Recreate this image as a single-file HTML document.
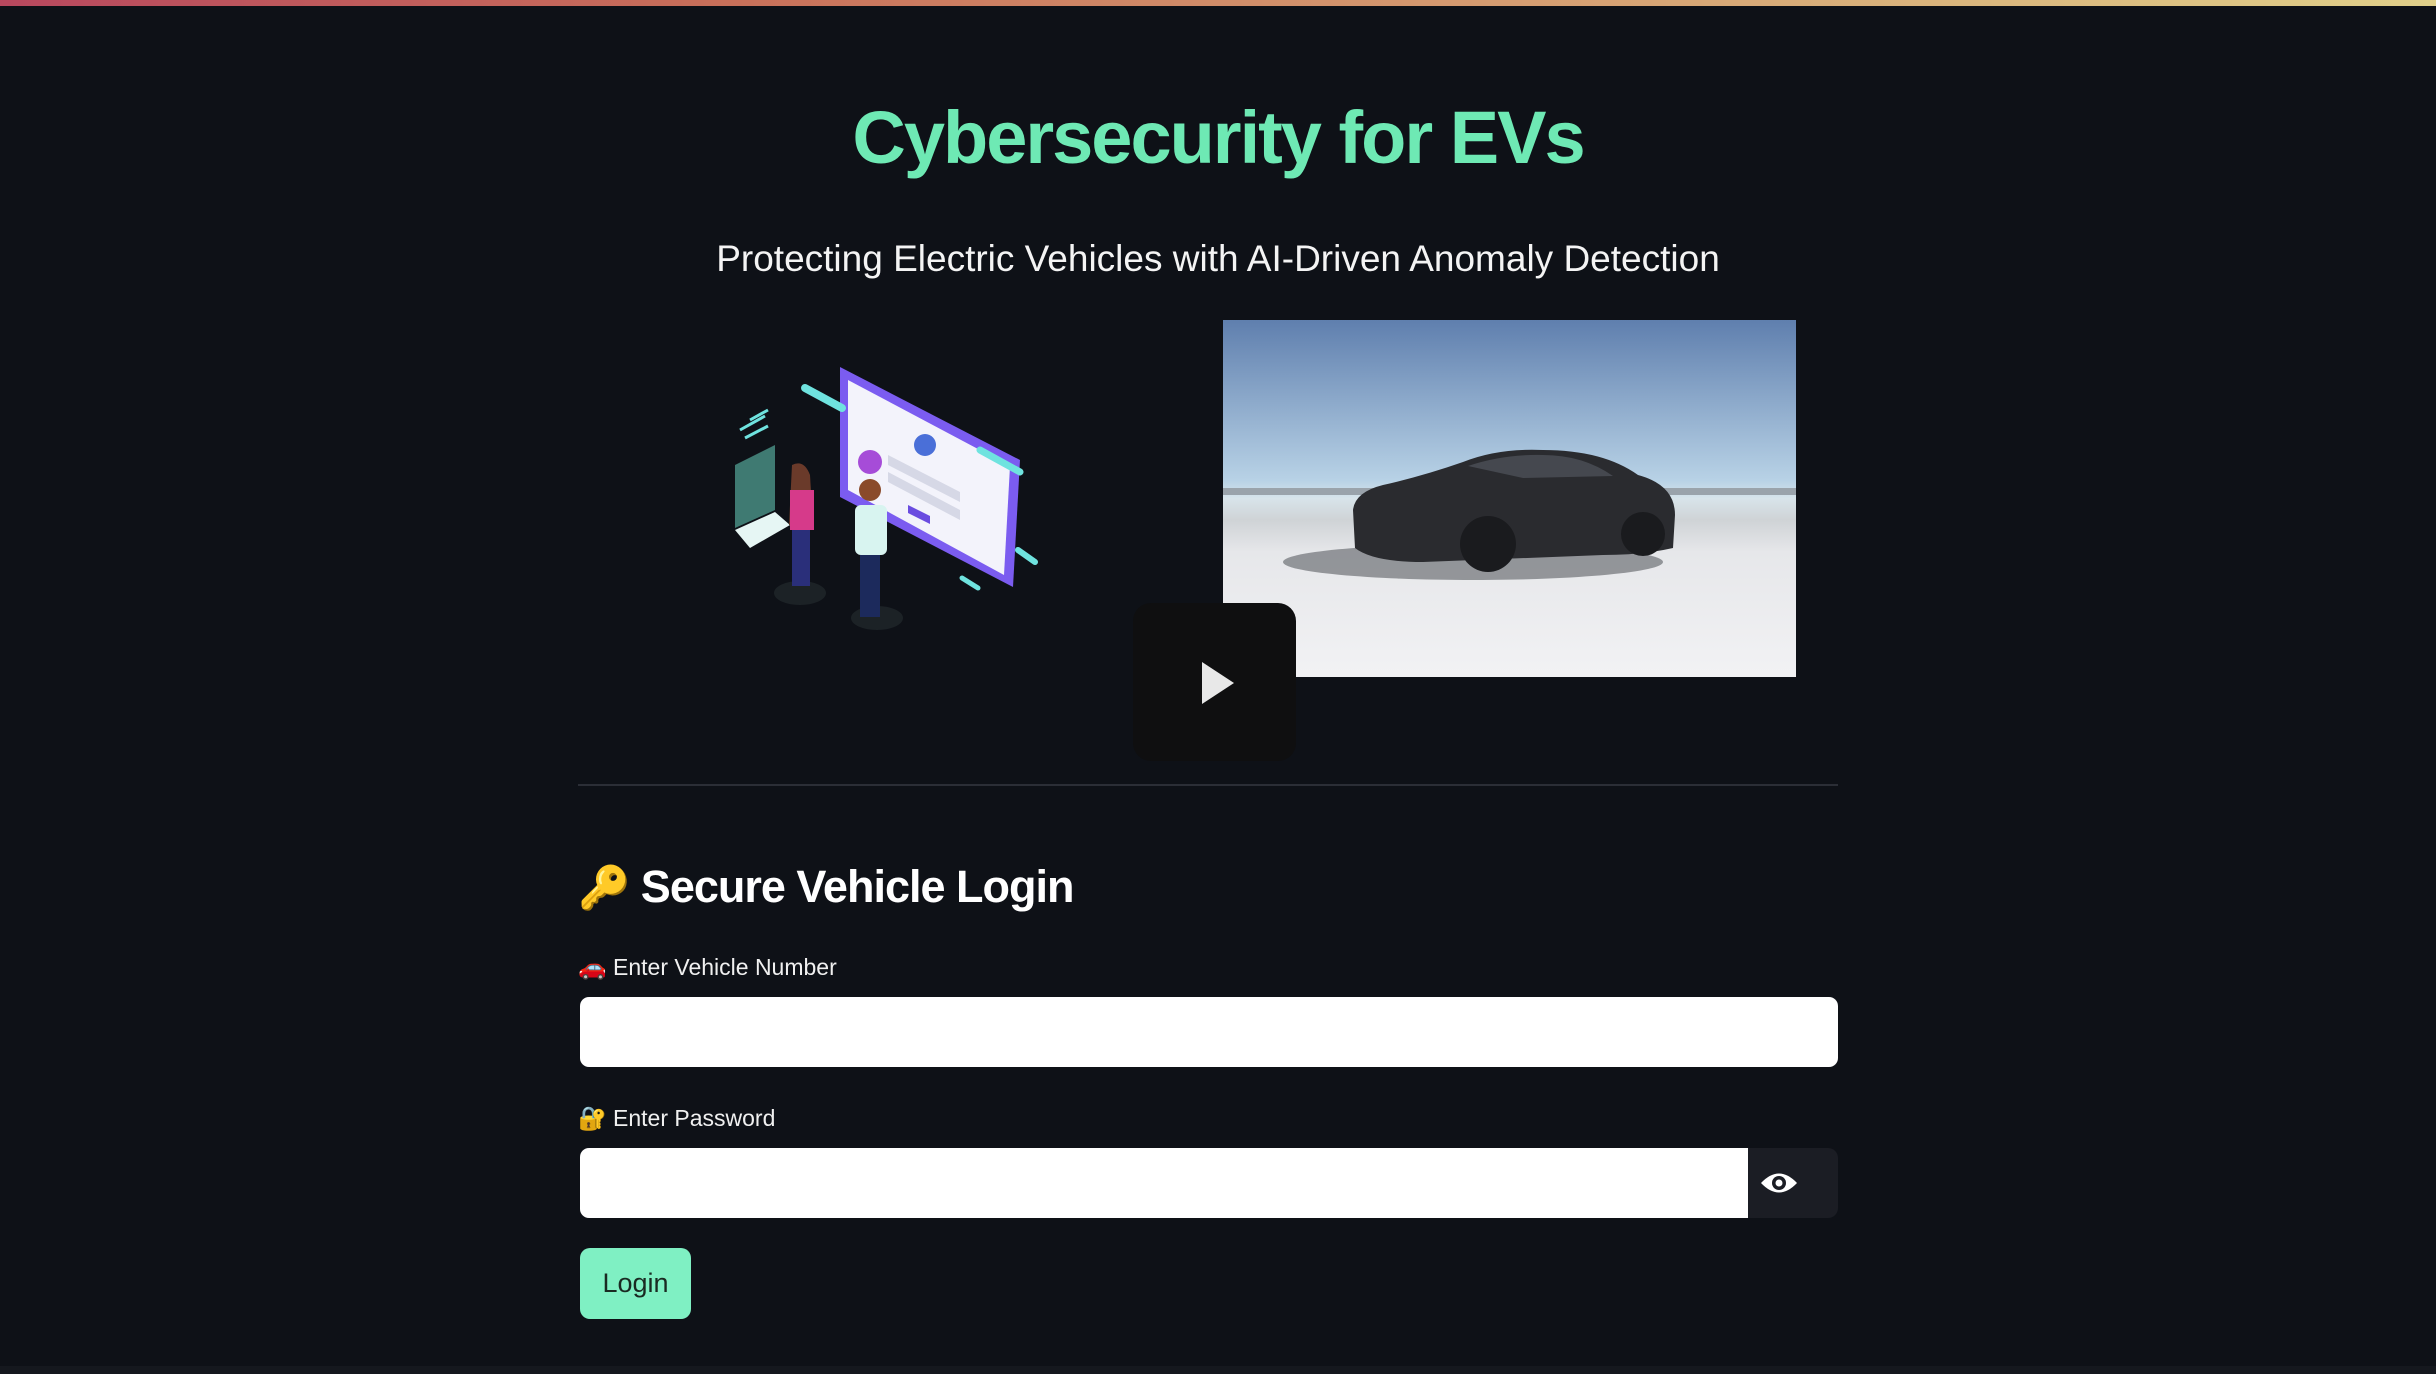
<!DOCTYPE html>
<html><head><meta charset="utf-8"><style>
html,body{margin:0;padding:0;}
body{width:2436px;height:1374px;background:#0e1117;position:relative;overflow:hidden;font-family:"Liberation Sans",sans-serif;}
.abs{position:absolute;}
.bar{left:0;top:0;width:2436px;height:6px;background:linear-gradient(90deg,#b8485e,#c8705a 30%,#d49a70 60%,#e0d08a 100%);}
h1{position:absolute;margin:0;left:0;width:2436px;top:88px;text-align:center;color:#6ee9b4;font-size:74px;font-weight:bold;letter-spacing:-2px;line-height:100px;}
.sub{left:0;width:2436px;top:234px;text-align:center;color:#f4f4f4;font-size:37px;line-height:50px;letter-spacing:0px;}
.play{left:1133px;top:603px;width:163px;height:158px;background:#0f0f10;border-radius:18px;}
.hr{left:578px;top:784px;width:1260px;height:2px;background:#2b2e36;}
.h2{left:578px;top:857px;color:#fff;font-size:45px;font-weight:bold;line-height:60px;letter-spacing:-1px;}
.lbl{color:#f0f0f0;font-size:23px;line-height:30px;}
.in{background:#fff;border-radius:9px;}
.btn{left:580px;top:1248px;width:111px;height:71px;background:#7ff0c3;border-radius:10px;color:#1a2a22;font-size:27px;line-height:71px;text-align:center;}
</style></head><body>
<div class="abs bar"></div>
<h1>Cybersecurity for EVs</h1>
<div class="abs sub">Protecting Electric Vehicles with AI-Driven Anomaly Detection</div>

<svg class="abs" style="left:720px;top:350px" width="340" height="290" viewBox="0 0 340 290">
 <ellipse cx="80" cy="243" rx="26" ry="12" fill="#1c2226"/>
 <ellipse cx="157" cy="268" rx="26" ry="12" fill="#1c2226"/>
 <polygon points="120,17 300,110 293,237 120,147" fill="#7b5cf0"/>
 <polygon points="128,30 290,116 284,225 128,140" fill="#f3f3fb"/>
 <circle cx="205" cy="95" r="11" fill="#4a6fd8"/>
 <circle cx="150" cy="112" r="12" fill="#a64cd8"/>
 <polygon points="168,105 240,142 240,152 168,115" fill="#d6d8e6"/>
 <polygon points="168,122 240,160 240,170 168,132" fill="#d6d8e6"/>
 <polygon points="188,155 210,166 210,174 188,163" fill="#6a4ce0"/>
 <line x1="85" y1="38" x2="122" y2="58" stroke="#6fe3df" stroke-width="8" stroke-linecap="round"/>
 <line x1="260" y1="100" x2="300" y2="122" stroke="#6fe3df" stroke-width="7" stroke-linecap="round"/>
 <line x1="298" y1="200" x2="315" y2="212" stroke="#6fe3df" stroke-width="6" stroke-linecap="round"/>
 <line x1="242" y1="228" x2="258" y2="238" stroke="#6fe3df" stroke-width="5" stroke-linecap="round"/>
 <line x1="20" y1="80" x2="45" y2="66" stroke="#6fe3df" stroke-width="3"/>
 <line x1="25" y1="88" x2="48" y2="76" stroke="#6fe3df" stroke-width="3"/>
 <line x1="30" y1="70" x2="48" y2="60" stroke="#6fe3df" stroke-width="3"/>
 <polygon points="15,115 55,95 55,160 15,178" fill="#3f7a72"/>
 <polygon points="15,180 55,162 70,175 30,198" fill="#e6f6f4"/>
 <path d="M72 115 q12 -6 18 10 l3 50 -24 0 z" fill="#6a3a2a"/>
 <rect x="70" y="140" width="24" height="40" fill="#d63a8a"/>
 <rect x="72" y="180" width="18" height="56" fill="#2a2f7a"/>
 <circle cx="150" cy="140" r="11" fill="#8a4a2a"/>
 <rect x="135" y="155" width="32" height="50" rx="6" fill="#d8f4f0"/>
 <rect x="140" y="205" width="20" height="62" fill="#1c2a5c"/>
</svg>

<svg class="abs" style="left:1223px;top:320px" width="573" height="357" viewBox="0 0 573 357">
 <defs>
  <linearGradient id="sky" x1="0" y1="0" x2="0" y2="1">
   <stop offset="0" stop-color="#5f7fae"/><stop offset="0.45" stop-color="#b8d2e6"/><stop offset="0.5" stop-color="#d8e4ea"/><stop offset="0.56" stop-color="#cfd3d6"/><stop offset="0.65" stop-color="#e6e7ea"/><stop offset="1" stop-color="#f2f2f4"/>
  </linearGradient>
 </defs>
 <rect width="573" height="357" fill="url(#sky)"/>
 <rect x="0" y="168" width="573" height="7" fill="#9aa3ab"/>
 <ellipse cx="250" cy="242" rx="190" ry="18" fill="#5a5d62" opacity="0.6"/>
 <path d="M130 190 Q132 172 160 165 Q200 156 240 142 Q275 128 320 130 Q380 130 415 155 Q452 165 452 195 L450 228 Q420 235 380 235 L200 242 Q150 242 132 228 Z" fill="#2a2b2f"/>
 <path d="M245 146 Q280 134 320 135 Q360 135 390 156 L300 158 Z" fill="#45484f"/>
 <circle cx="265" cy="224" r="28" fill="#1a1b1e"/>
 <circle cx="420" cy="214" r="22" fill="#1a1b1e"/>
</svg>

<div class="abs play"></div>
<svg class="abs" style="left:1200px;top:660px" width="36" height="46" viewBox="0 0 36 46"><polygon points="2,2 34,23 2,44" fill="#e8e8e8"/></svg>

<div class="abs hr"></div>
<div class="abs h2"><span style="font-size:42px">🔑</span> Secure Vehicle Login</div>
<div class="abs lbl" style="left:578px;top:952px"><span style="color:#d44">🚗</span> Enter Vehicle Number</div>
<div class="abs in" style="left:580px;top:997px;width:1258px;height:70px"></div>
<div class="abs lbl" style="left:578px;top:1103px">🔐 Enter Password</div>
<div class="abs in" style="left:580px;top:1148px;width:1168px;height:70px;border-radius:9px 0 0 9px"></div>
<div class="abs" style="left:1748px;top:1148px;width:90px;height:70px;background:#1b1d24;border-radius:0 10px 10px 0"></div>
<svg class="abs" style="left:1759px;top:1170px" width="40" height="26" viewBox="0 0 40 26"><path d="M2 13 Q20 -6 38 13 Q20 32 2 13 Z" fill="#fff"/><circle cx="20" cy="13" r="7" fill="#1b1d24"/><circle cx="20" cy="13" r="3.5" fill="#fff"/></svg>
<div class="abs btn">Login</div>
<div class="abs" style="left:0;top:1366px;width:2436px;height:8px;background:#15181e"></div>
</body></html>
